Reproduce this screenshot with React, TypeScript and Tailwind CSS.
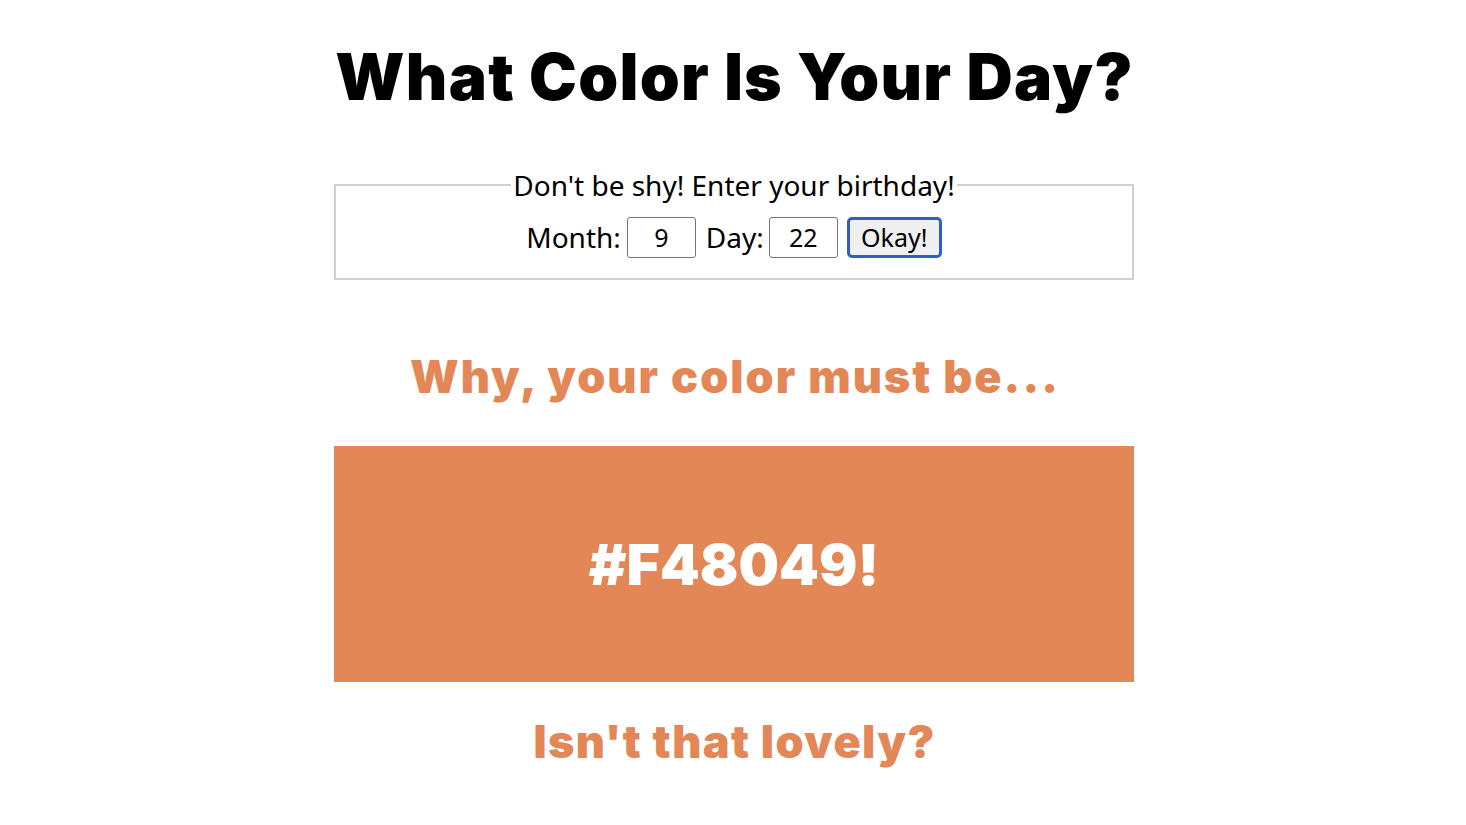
import React from "react";

const heavy = { fontFamily: "Inter, 'Noto Sans', sans-serif", fontWeight: 900 } as const;

export default function App() {
  return (
    <div className="min-h-[825px] w-full bg-white" style={{ fontFamily: "'Noto Sans', 'Open Sans', sans-serif" }}>
      <div className="ml-[334px] flex w-[800px] flex-col items-center">
        <h1
          style={heavy}
          className="mt-[45px] -mr-[1.3px] whitespace-nowrap text-[64px] leading-[64px] tracking-[1.3px] text-black"
        >
          What Color Is Your Day?
        </h1>
        <fieldset className="mt-[62px] w-full border-2 border-solid border-[#d0d0d0] px-0 pb-[20px] pt-0">
          <legend className="mx-auto px-[2px] text-[28px] leading-[28px] text-black">
            Don&apos;t be shy! Enter your birthday!
          </legend>
          <div className="mt-[17px] flex items-center justify-center text-[28px] text-black">
            <span>Month:</span>
            <input
              type="text"
              defaultValue="9"
              className="ml-[6px] h-[41px] w-[69px] rounded-[3px] border border-[#767676] bg-white text-center text-[25px] text-black outline-none"
            />
            <span className="ml-[10px]">Day:</span>
            <input
              type="text"
              defaultValue="22"
              className="ml-[5px] h-[41px] w-[69px] rounded-[3px] border border-[#767676] bg-white text-center text-[25px] text-black outline-none"
            />
            <button
              type="button"
              className="ml-[9px] h-[41px] w-[95px] rounded-[5px] border-[3px] border-[#2f5fc0] bg-[#efefef] text-[25px] leading-none text-black"
            >
              Okay!
            </button>
          </div>
        </fieldset>
        <h2
          style={heavy}
          className="mt-[74px] -mr-[2px] whitespace-nowrap text-[45px] leading-[45px] tracking-[2px] text-[#e38756]"
        >
          Why, your color must be...
        </h2>
        <div className="mt-[47px] flex h-[236px] w-full items-center justify-center bg-[#e38756]">
          <span style={heavy} className="text-[57px] leading-none text-white">
            #F48049!
          </span>
        </div>
        <h2
          style={heavy}
          className="mt-[37px] -mr-[1.4px] whitespace-nowrap text-[45px] leading-[45px] tracking-[1.4px] text-[#e38756]"
        >
          Isn&apos;t that lovely?
        </h2>
      </div>
    </div>
  );
}
